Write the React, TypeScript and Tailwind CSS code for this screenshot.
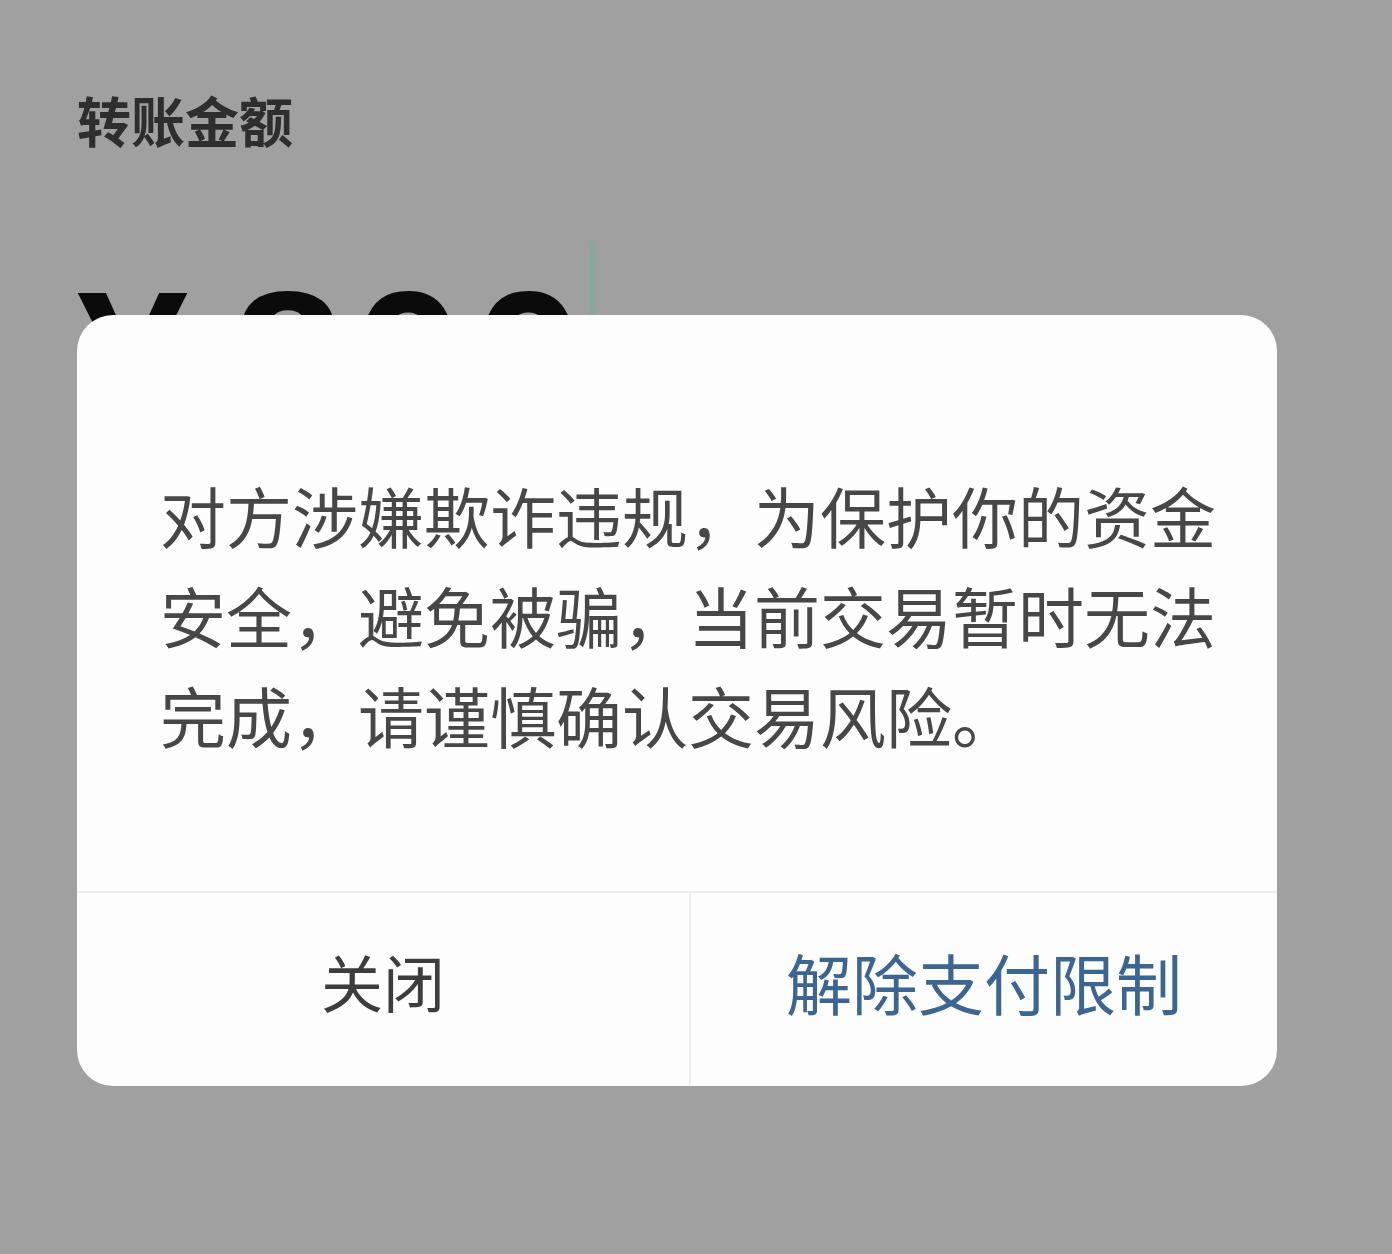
import React from 'react';

const cjk = { fontFamily: '"Noto Sans CJK SC", "Noto Sans", sans-serif' };

const RiskDialog: React.FC = () => {
  return (
    <div
      className="absolute left-[77px] top-[315px] w-[1200px] rounded-[36px] bg-[#fdfdfd] overflow-hidden"
      style={cjk}
    >
      <div className="pt-[149px] pb-[127px] pl-[83px]">
        <p className="w-[1060px] text-[66px] leading-[100px] text-[#474747]">
          对方涉嫌欺诈违规，为保护你的资金安全，避免被骗，当前交易暂时无法完成，请谨慎确认交易风险。
        </p>
      </div>
      <div className="flex h-[195px] border-t-2 border-[#eeeeee]">
        <button className="w-[614px] pb-[16px] flex items-center justify-center text-[62px] text-[#3d3d3d] border-r-2 border-[#eeeeee]">
          关闭
        </button>
        <button className="flex-1 pb-[16px] flex items-center justify-center text-[66px] text-[#3b6592]">
          解除支付限制
        </button>
      </div>
    </div>
  );
};

export default function App() {
  return (
    <div className="relative w-[1392px] h-[1254px] bg-[#a0a0a0] overflow-hidden">
      {/* transfer form behind the modal */}
      <div className="pt-[93px] pl-[77px]">
        <div className="text-[54px] leading-none font-semibold text-[#2e2e2e]" style={cjk}>
          转账金额
        </div>
        <div
          className="mt-[115px] flex items-start text-[200px] leading-none font-bold text-[#0b0b0b]"
          style={{ fontFamily: '"Liberation Sans", Arial, sans-serif' }}
        >
          <span>¥</span>
          <span className="ml-[44px] tracking-[9px]">800</span>
          <span className="-ml-[4px] -mt-[20px] w-[7px] h-[220px] bg-[#8ca79f]" />
        </div>
      </div>
      <RiskDialog />
    </div>
  );
}
